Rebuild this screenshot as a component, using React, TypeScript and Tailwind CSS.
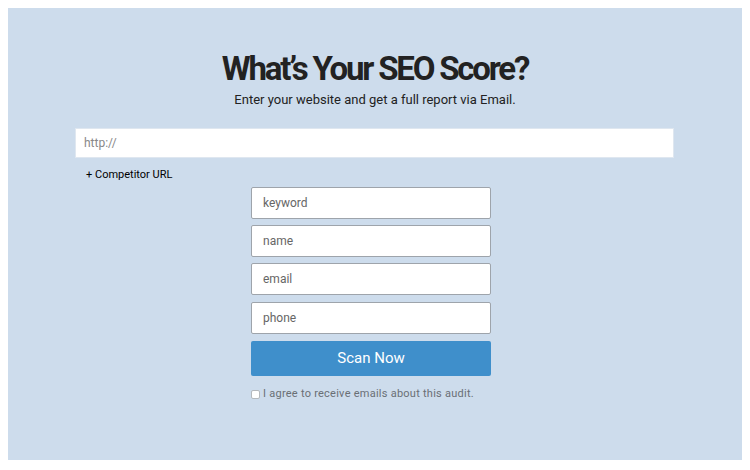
export default function App() {
  const fields = ["keyword", "name", "email", "phone"];
  return (
    <div className="w-[750px] h-[470px] bg-white p-2 font-['Roboto',sans-serif]">
      <div className="h-[452px] w-[734px] bg-[#cddcec] flex flex-col items-center pt-[41px]">
        <h1 className="text-[33px] leading-[40px] font-bold tracking-[-2.2px] text-[#222]">
          What’s Your SEO Score?
        </h1>
        <p className="mt-[2px] text-[13px] leading-[18px] text-[#222]">
          Enter your website and get a full report via Email.
        </p>
        <div className="mt-[19px] w-[599px] self-start ml-[67px]">
          <input
            className="w-full h-[30px] bg-white border border-[#dfe7f0] px-[8px] text-[12px] text-[#333] placeholder:text-[#888] outline-none"
            placeholder="http://"
          />
          <div className="mt-[9px] ml-[11px] text-[11px] leading-[16px] text-black">+ Competitor URL</div>
        </div>
        <div className="mt-[4px] mr-[8px] w-[240px] flex flex-col gap-[6px]">
          {fields.map((f, i) => (
            <input
              key={f}
              className={`w-full h-[32px] bg-white border border-[#9ea4ab] rounded-[2px] px-[11px] text-[12px] text-[#333] placeholder:text-[#666] outline-none ${i === 3 ? "mt-[1px]" : ""}`}
              placeholder={f}
            />
          ))}
          <button className="w-full h-[35px] bg-[#3f8fcb] rounded-[2px] text-white text-[15px] mt-[1px]">
            Scan Now
          </button>
          <label className="mt-[4px] flex items-center gap-[3px] whitespace-nowrap text-[11px] leading-[16px] text-[#6a6f75] tracking-[0.25px]">
            <span className="w-[9px] h-[9px] bg-white border border-[#b5b9bd] rounded-[2px] inline-block" />
            I agree to receive emails about this audit.
          </label>
        </div>
      </div>
    </div>
  );
}
